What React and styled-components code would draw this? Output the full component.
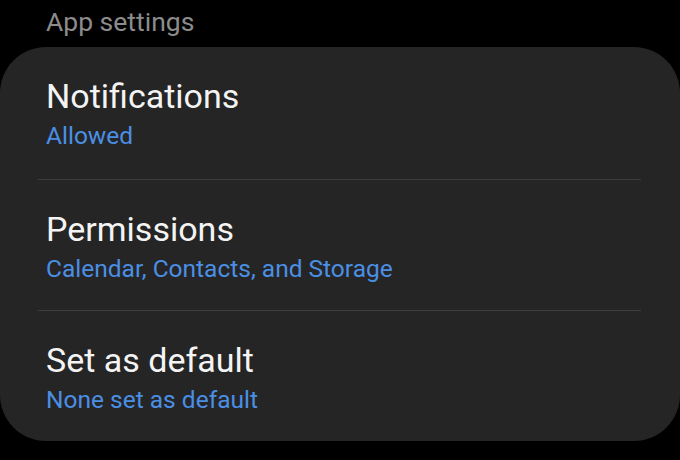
import styled, { createGlobalStyle } from 'styled-components';

const GlobalStyle = createGlobalStyle`
  html, body {
    margin: 0;
    padding: 0;
    background: #000;
  }
  body {
    font-family: Roboto, "Noto Sans", "Liberation Sans", sans-serif;
    -webkit-font-smoothing: antialiased;
  }
`;

const Screen = styled.div`
  width: 680px;
  height: 460px;
  background: #000;
  overflow: hidden;
`;

const SectionHeader = styled.div`
  padding: 5px 0 0 46px;
  height: 47px;
  font-size: 26.5px;
  line-height: 34px;
  color: #8c8c8c;
  box-sizing: border-box;
`;

const Card = styled.div`
  background: #252525;
  border-radius: 46px;
  display: flex;
  flex-direction: column;
`;

const Row = styled.div`
  padding: 29px 46px ${p => p.bottom}px;
  display: flex;
  flex-direction: column;
`;

const Title = styled.div`
  font-size: 34px;
  line-height: 40px;
  color: #f4f4f4;
`;

const Subtitle = styled.div`
  margin-top: 4px;
  font-size: 24.5px;
  line-height: 32px;
  color: #4b8fe4;
`;

const Divider = styled.div`
  height: 1px;
  margin: 0 39px 0 38px;
  background: #3e3e3e;
`;

const items = [
  { title: 'Notifications', sub: 'Allowed', bottom: 27 },
  { title: 'Permissions', sub: 'Calendar, Contacts, and Storage', bottom: 25 },
  { title: 'Set as default', sub: 'None set as default', bottom: 25 },
];

export default function App() {
  return (
    <Screen>
      <GlobalStyle />
      <SectionHeader>App settings</SectionHeader>
      <Card>
        {items.map((item, i) => (
          <div key={item.title}>
            {i > 0 && <Divider />}
            <Row bottom={item.bottom}>
              <Title>{item.title}</Title>
              <Subtitle>{item.sub}</Subtitle>
            </Row>
          </div>
        ))}
      </Card>
    </Screen>
  );
}
